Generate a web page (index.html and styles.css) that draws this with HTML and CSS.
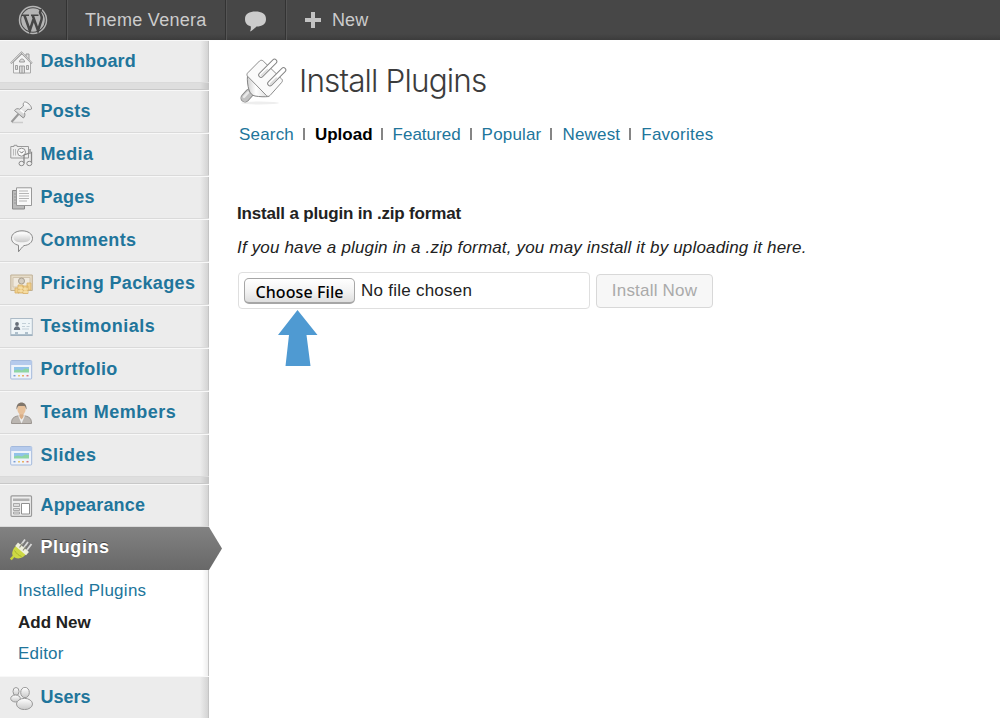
FILE: index.html
```html
<!DOCTYPE html>
<html lang="en">
<head>
<meta charset="utf-8">
<title>Install Plugins</title>
<link rel="stylesheet" href="styles.css">
</head>
<body>
<svg class="defs" width="0" height="0">
  <defs>
    <linearGradient id="silver" x1="0" y1="0" x2="0" y2="1"><stop offset="0" stop-color="#fff"/><stop offset="1" stop-color="#c9c9c9"/></linearGradient>
    <linearGradient id="body" x1="0" y1="0" x2="1" y2="0"><stop offset="0" stop-color="#d0d0d0"/><stop offset=".4" stop-color="#fff"/><stop offset="1" stop-color="#d8d8d8"/></linearGradient>
    <symbol id="window" viewBox="0 0 23 23">
      <rect x=".7" y="1.500" width="21" height="18.500" rx="1" fill="#eef3fa" stroke="#a3b9dc"/>
      <path d="M1 2h20.500v4H1z" fill="#b5caec"/>
      <rect x="4" y="8" width="15" height="5.500" fill="#8fd6a4"/>
      <path d="M4 8h15v2l-4-.5-3 2-4-1-4 1z" fill="#91c3e9"/>
      <path d="M3.500 16.700h2" stroke="#7c9ed0" stroke-width="1.500"/><path d="M8 16.700h2" stroke="#e9c670" stroke-width="1.500"/><path d="M12 16.700h2" stroke="#e9b060" stroke-width="1.500"/><path d="M16.500 16.700h2" stroke="#d67b83" stroke-width="1.500"/>
    </symbol>
  </defs>
</svg>
<header class="bar">
  <a class="bar-item bar-logo"><svg width="30" height="30" viewBox="0 0 30 30"><circle cx="15" cy="15" r="13.500" fill="none" stroke="#b5b5b5" stroke-width="1.500"/><circle cx="15" cy="15" r="11.800" fill="#b5b5b5"/><path d="M4 10.200h7M13 10.200h7.500" fill="none" stroke="#464646" stroke-width="1.400"/><path d="M6.500 10.500l5.300 15 3.600-11M14.700 10.500l5.300 15 3.600-11c.9-3-.4-4.300-1.300-6-.8-1.700 0-3.300 1.700-3.400" fill="none" stroke="#464646" stroke-width="2.500"/></svg></a>
  <a class="bar-item bar-site">Theme Venera</a>
  <a class="bar-item bar-comments"><svg width="24" height="22" viewBox="0 0 24 22"><path d="M11.500 1.500C17.500 1.500 22 3.500 22 9s-4 7.500-9.500 7.500C10.500 18.500 8.500 20.500 6 21.500c.9-1.600 1-3.500.7-5.200C2.500 15.300 1 12.500 1 9c0-5.500 4.500-7.500 10.500-7.500z" fill="#ccc"/></svg></a>
  <a class="bar-item bar-new"><svg width="16" height="16" viewBox="0 0 16 16"><path d="M6 0h4v6h6v4h-6v6H6v-6H0V6h6z" fill="#c3c3c3"/></svg><span>New</span></a>
</header>
<div class="page">
  <nav class="menu">
    <a class="item"><svg class="icon" viewBox="0 0 23 23"><path d="M16 5.500V3h3v6" fill="#ddd" stroke="#999"/><path d="M3.500 11v11h17V11L12 3z" fill="#f3f3f3" stroke="#aaa"/><path d="M.8 12.300 11.500 1.500l10.500 10.800" fill="none" stroke="#999" stroke-width="1.800"/><path d="M.8 12.300 11.500 1.500l10.500 10.800" fill="none" stroke="#eee" stroke-width=".7"/><path d="M9.500 22v-7h5v7zM12 15v7M5.500 14.500h2v4h-2zM16.500 14.500h2v4h-2z" fill="#ddd" stroke="#999" stroke-width=".9"/><path d="M9.500 11c0-4 5-4 5 0z" fill="#ddd" stroke="#999"/></svg><span class="w1">Dashboard</span></a>
    <div class="gap"></div>
    <a class="item"><svg class="icon" viewBox="0 0 23 23"><path d="M2 21.500h11" stroke="#ccc" stroke-width="1.500"/><path d="M1.500 21 8.500 13" stroke="#999" stroke-width="2"/><path d="M14.500 1c2.500-.5 7.500 4 7 7-1.200 1-2.500.6-3.500.2l-3.600 3.300c1 2.200.4 4.400-1.100 5.500L4.500 9.500c1.200-2 3.300-2.200 5.200-1.300L13.500 5c-.6-1.500-.3-3.200 1-4z" fill="url(#silver)" stroke="#909090"/><path d="m10.500 8.800 3.700 3" stroke="#fff" stroke-width="1.500"/></svg><span class="w2">Posts</span></a>
    <a class="item"><svg class="icon" viewBox="0 0 23 23"><path d="M.8 2.500H4V1.300h3v1.200h11.500V14H.8z" fill="#eee" stroke="#999"/><path d="M3.500 5v6.500M5.500 5v6.500" stroke="#bbb"/><circle cx="11.500" cy="8.200" r="4" fill="#f9f9f9" stroke="#909090"/><path d="m9.500 7.500 2.500 1.500 1.500-2" fill="none" stroke="#888"/><path d="M14 19.500V11l7.500-2.500v10.500" fill="none" stroke="#888" stroke-width="1.300"/><path d="M20 5v4" stroke="#aaa" stroke-width="2"/><ellipse cx="11.500" cy="19.500" rx="2.500" ry="2.200" fill="#eee" stroke="#888"/><ellipse cx="19.300" cy="19.500" rx="2.500" ry="2.200" fill="#eee" stroke="#888"/></svg><span class="w3">Media</span></a>
    <a class="item"><svg class="icon" viewBox="0 0 23 23"><path d="M2.500 3.500h12v18.500h-12z" fill="#bbb" stroke="#888"/><path d="M4 7h2M4 10h2M4 13h2M4 16h2" stroke="#999"/><path d="M6.500 .8h15v17.700h-15z" fill="#fafafa" stroke="#999"/><path d="M9 4h9M9 6.500h10M9 9h10M9 11.500h10M9 14h8" stroke="#b5b5b5"/></svg><span class="w4">Pages</span></a>
    <a class="item"><svg class="icon" viewBox="0 0 23 23"><path d="M12 .8c6 0 10.500 3 10.500 7.500 0 4-3.500 6.800-8.500 7.300-2 1.500-3.500 3.700-5.500 6.200v-6.500C4.500 14.300 1.500 12 1.500 8.300 1.500 3.800 6 .8 12 .8z" fill="#f4f4f4" stroke="#888"/><path d="M12 2.500c5 0 8.500 2 8.500 5.300s-3.500 4.500-8.500 4.500-8.500-1.200-8.500-4.500 3.500-5.300 8.500-5.300z" fill="url(#silver)"/></svg><span class="w5">Comments</span></a>
    <a class="item"><svg class="icon" viewBox="0 0 23 23"><path d="M.8 2h21.500v15.500H.8z" fill="#e6dcc9" stroke="#c0b196"/><path d="M3 4.500h17v9.500H3z" fill="#efe9de" stroke="#d2c5af"/><circle cx="11.500" cy="8" r="3" fill="#d4cdc0" stroke="#a89e90"/><path d="M8 12h5v8H8zM13 13h5v7.500h-5zM17 10h4v7h-4zM5 15h4v5H5z" fill="#f1d08c" stroke="#d8b068" stroke-width=".8"/><path d="M8 15h5M8 18h5M13 16h5M13 19h5" stroke="#fae8b6"/></svg><span class="w6">Pricing Packages</span></a>
    <a class="item"><svg class="icon" viewBox="0 0 23 23"><rect x=".8" y="2.500" width="21.500" height="17" fill="#eff5f8" stroke="#acbac6"/><path d="M1 19h21M5 17h3M15 17h3" stroke="#9aafbd" stroke-width="1.500"/><circle cx="7" cy="8" r="1.900" fill="#656d78"/><path d="M3.800 14c0-5 6.400-5 6.400 0z" fill="#69717d"/><path d="M12 7.500h4M18 7.500h2M12 10.500h3M16.500 10.500h3M12 13h7" stroke="#c3d0d8" stroke-width="1.200"/></svg><span class="w7">Testimonials</span></a>
    <a class="item"><svg class="icon"><use href="#window"/></svg><span class="w8">Portfolio</span></a>
    <a class="item"><svg class="icon" viewBox="0 0 23 23"><path d="M1.500 21.500c0-5 2-6.500 6-7.500h8c4 1 6 2.500 6 7.500z" fill="#bbb6b1" stroke="#9a948f"/><path d="m8 13.500 3.500 8 3.500-8z" fill="#eee"/><path d="M9.500 10.500h4V15l-2 2.500-2-2.500z" fill="#d9ae86"/><ellipse cx="11.500" cy="7" rx="4.200" ry="5.500" fill="#e7c19b"/><path d="M6.500 7.500C5.500-2 17.500-2 16.500 7.500c-1-1-1-3-2-3.500h-6c-1 .5-1 2.500-2 3.500z" fill="#80766b"/></svg><span class="w9">Team Members</span></a>
    <a class="item"><svg class="icon"><use href="#window"/></svg><span class="w10">Slides</span></a>
    <div class="gap"></div>
    <a class="item"><svg class="icon" viewBox="0 0 23 23"><rect x="1" y=".8" width="20.500" height="20.500" rx="1" fill="#eee" stroke="#999" stroke-width="1.200"/><path d="M3 3.500h16.500V6H3z" fill="#b0b0b0"/><path d="M3.500 8.500h6v3h-6zM3.500 13.500h6v2h-6zM3.500 17h6v2h-6z" fill="#ddd" stroke="#999" stroke-width=".8"/><path d="M11.500 8.500h8V19h-8z" fill="#fff" stroke="#909090"/></svg><span class="w11">Appearance</span></a>
    <a class="item current"><svg class="icon" viewBox="0 0 23 23"><path d="m.8 21.500 4-4.500" stroke="#c8d637" stroke-width="2.400"/><path d="m9.500 9 5.500-7.500M12.500 11.500 18 4M15.500 14l6-8" stroke="#d8d8d8" stroke-width="1.800"/><path d="M6.500 7.500 16.500 16l-3.500 3c-3.500 2-7 2-9.500-.5s-.8-6 .5-8.500z" fill="#cdd944"/><path d="m8 4.500 11 9.500-3 3.200L5.200 8z" fill="#eff0dc"/><path d="m9.500 9.500 3-4M13 12.500l3-4" stroke="#8b8b78" stroke-width="1.200"/><path d="M4.500 12.500c2 3 4 5 7 6" fill="none" stroke="#a7b32c"/></svg><span class="w12">Plugins</span></a>
    <div class="submenu">
      <a class="s1">Installed Plugins</a>
      <a class="active">Add New</a>
      <a class="s3">Editor</a>
    </div>
    <a class="item"><svg class="icon" viewBox="0 0 23 23"><g fill="url(#silver)" stroke="#999"><ellipse cx="6" cy="4.500" rx="3" ry="4"/><ellipse cx="5.500" cy="11.500" rx="4.800" ry="3.500"/><ellipse cx="15" cy="5.500" rx="4.300" ry="5.200"/><ellipse cx="14.500" cy="17" rx="8" ry="5.600"/></g></svg><span class="w13">Users</span></a>
  </nav>
  <main class="content">
    <div class="title">
      <svg width="48" height="46" viewBox="0 0 48 46"><ellipse cx="20" cy="45" rx="19" ry="1.500" fill="#eee"/><path d="M9.500 35 5 40" stroke="#808080" stroke-width="9" stroke-linecap="round"/><path d="M9.500 35 5 40" stroke="#c2c2c2" stroke-width="7.400" stroke-linecap="round"/><path d="M8 34.500 4 38.800" stroke="#e8e8e8" stroke-width="2.500" stroke-linecap="round"/><path d="M7.500 17.500c-.5 5 .2 10 1.500 14.500 1 3 3 5.500 6 6 5 .8 9 1 14 .5z" fill="url(#body)" stroke="#858585"/><path d="M7.800 14.800 19.500 3c1.200-1 2.500-1 3.700 0L41.500 20.800c1.200 1 1.200 2.400.2 3.600L30 37.500c-1 1-2.300 1.200-3.400.2L7.800 18.500c-1.200-1.200-1.100-2.600 0-3.700z" fill="#fafafa" stroke="#8d8d8d"/><path d="m21 17 13.500-13.500M30 25.500 43.500 12" stroke="#858585" stroke-width="5.600" stroke-linecap="round"/><path d="m21 17 13.500-13.500M30 25.500 43.500 12" stroke="#fff" stroke-width="3.700" stroke-linecap="round"/><path d="m21.500 17.500 6-5.800M30.500 26l6-5.800" stroke="#ddd" stroke-width="1.800" stroke-linecap="round"/></svg>
      <h1>Install Plugins</h1>
    </div>
    <nav class="tabs"><a class="t1">Search</a><i></i><b>Upload</b><i></i><a class="t3">Featured</a><i></i><a class="t4">Popular</a><i></i><a class="t5">Newest</a><i></i><a class="t6">Favorites</a></nav>
    <h2>Install a plugin in .zip format</h2>
    <p>If you have a plugin in a .zip format, you may install it by uploading it here.</p>
    <div class="form">
      <div class="file"><span class="choose">Choose File</span><span class="none">No file chosen</span></div>
      <div class="install"><span>Install Now</span></div>
    </div>
    <svg class="arrow" width="40" height="57" viewBox="0 0 40 57"><path d="M19.500 0 39.500 25H28.500L32.500 56H7.500L11 25H0z" fill="#4f9ad2"/></svg>
  </main>
</div>
</body>
</html>
```
FILE: styles.css
```css
* { box-sizing: border-box; }
body {
  margin: 0;
  height: 718px;
  overflow: hidden;
  background: #fff;
  font-family: "Liberation Sans", Arial, sans-serif;
  color: #222;
  white-space: nowrap;
}
.defs { position: absolute; }
.bar {
  display: flex;
  height: 40px;
  background: linear-gradient(#474747 34px, #3c3c3c);
  color: #ccc;
  font-size: 18px;
}
.bar-item {
  display: flex;
  align-items: center;
  border-right: 1px solid #333;
  box-shadow: 1px 0 0 #555;
}
.bar-logo { width: 67px; padding-left: 18px; }
.bar-site { width: 159px; padding-left: 18px; letter-spacing: .3px; }
.bar-comments { width: 60px; padding-left: 18px; }
.bar-comments svg { margin-top: 2px; }
.bar-new { border: 0; box-shadow: none; padding-left: 19px; gap: 11px; }
.bar-new span { letter-spacing: .1px; }
.page { display: flex; height: 678px; }
.menu {
  width: 209px;
  background: linear-gradient(90deg, transparent 200px, rgba(0,0,0,.1) 208px, #c4c4c4 208px), #ececec;
}
.item {
  display: flex;
  align-items: center;
  height: 43px;
  padding: 0 0 1px 10px;
  gap: 7.5px;
  border-top: 1px solid #f8f8f8;
  border-bottom: 1px solid #dadada;
  color: #21759b;
  font-size: 18px;
  font-weight: bold;
}
.w1, .w11 { letter-spacing: .15px; }
.w2, .w4 { letter-spacing: .25px; }
.w3, .w5, .w6, .w8 { letter-spacing: .36px; }
.w7, .w9, .w10 { letter-spacing: .5px; }
.w12 { letter-spacing: .6px; }
.icon { width: 23px; height: 23px; flex: none; margin-top: 3px; }
.gap {
  height: 7px;
  background: linear-gradient(90deg, transparent 200px, rgba(0,0,0,.1) 208px, #c4c4c4 208px), #dedede;
  border-bottom: 1px solid #c8c8c8;
}
.current {
  width: 222px;
  border: 0;
  padding-bottom: 2px;
  color: #fff;
  background: linear-gradient(#828282, #686868);
  clip-path: polygon(0 0, 209px 0, 222px 50%, 209px 100%, 0 100%);
  text-shadow: 0 -1px 0 #444;
}
.submenu {
  display: flex;
  flex-direction: column;
  height: 106px;
  padding: 5px 0 0 18px;
  font-size: 17px;
  line-height: 31.5px;
  color: #21759b;
  background: linear-gradient(90deg, transparent 202px, rgba(0,0,0,.07) 208px, #c4c4c4 208px), #fff;
}
.s1 { letter-spacing: .27px; }
.s3 { letter-spacing: .2px; }
.active { color: #222; font-weight: bold; }
.content { padding-left: 28px; }
.title { display: flex; align-items: flex-start; padding: 18px 0 0 3px; height: 80px; }
.title svg { overflow: visible; }
h1 {
  margin: 3px 0 0 11px;
  font: 300 31.5px/40px Inter, sans-serif;
  letter-spacing: -.87px;
  color: #3c3c3c;
}
.tabs { display: flex; align-items: center; height: 30px; padding-left: 2px; font-size: 17px; color: #21759b; }
.tabs b { color: #000; margin-right: -1px; }
.tabs a { letter-spacing: .18px; }
.tabs .t3 { letter-spacing: 0; }
.tabs .t6 { letter-spacing: .25px; }
.tabs i { width: 2px; height: 12px; background: #858585; margin: -2px 10px 0 9px; }
h2 { margin: 53px 0 0; font-size: 17px; line-height: 22px; letter-spacing: -.18px; }
p { margin: 12px 0 0; font-size: 17px; line-height: 22px; font-style: italic; letter-spacing: .165px; }
.form { display: flex; align-items: center; gap: 6px; margin: 13px 0 0 1px; font-size: 17px; }
.file {
  display: flex;
  align-items: center;
  width: 352px;
  height: 37px;
  padding-left: 5px;
  gap: 6px;
  border: 1px solid #dfdfdf;
  border-radius: 4px;
}
.choose {
  width: 111px;
  height: 26px;
  border: 1.5px solid #a6a6a6;
  border-bottom-width: 2px;
  border-radius: 5px;
  background: linear-gradient(#fff, #f2f2f2 55%, #dedede);
  color: #000;
  font: 500 16px/26px "Noto Sans", sans-serif;
  letter-spacing: .1px;
  text-align: center;
}
.none { letter-spacing: .25px; }
.install {
  width: 117px;
  height: 34px;
  border: 1px solid #d8d8d8;
  border-radius: 4px;
  background: #f7f7f7;
  color: #aaa;
  line-height: 32px;
  letter-spacing: .2px;
  text-align: center;
}
.arrow { display: block; margin: 1px 0 0 41px; }
```
